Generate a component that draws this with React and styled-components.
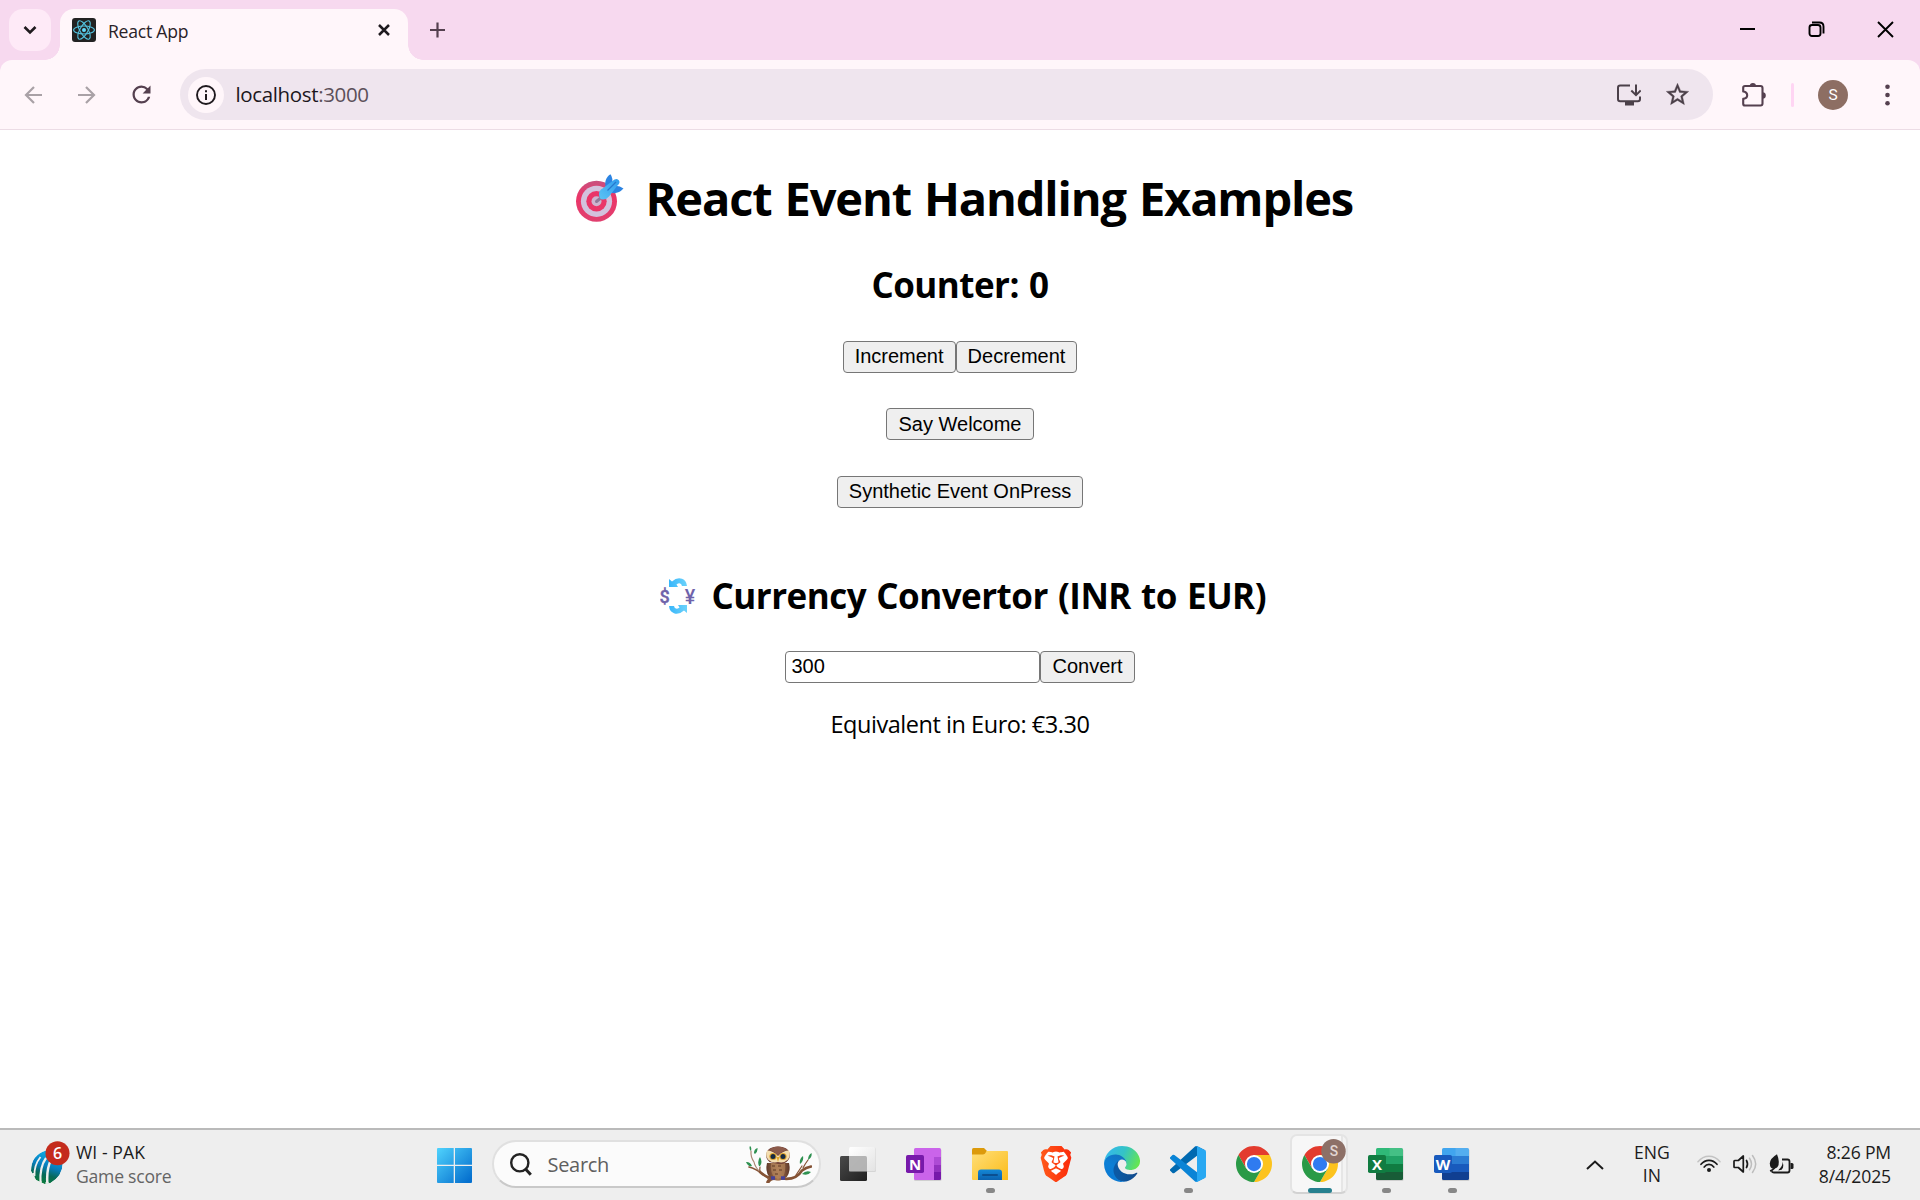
import React from "react";
import styled, { createGlobalStyle } from "styled-components";
import { SiBrave } from "react-icons/si";
import { MdRefresh, MdStarOutline } from "react-icons/md";

const GlobalStyle = createGlobalStyle`
  *, *::before, *::after { box-sizing: border-box; }
  body {
    margin: 0;
    background: #fff;
    font-family: "Open Sans", "Noto Sans", sans-serif;
    color: #000;
  }
  svg { display: block; flex: none; }
`;

const Screen = styled.div`
  width: 1920px;
  height: 1200px;
  display: flex;
  flex-direction: column;
  overflow: hidden;
`;

/* ---------- Tab strip ---------- */

const TabStrip = styled.header`
  height: 60px;
  flex: none;
  display: flex;
  align-items: flex-end;
  padding-left: 9px;
  background: #f7d9ef;
`;

const TabSearch = styled.button`
  width: 42px;
  height: 42px;
  margin-bottom: 9px;
  padding: 0;
  border: 0;
  border-radius: 14px;
  background: #feeaf7;
  display: grid;
  place-items: center;
`;

const Flare = styled.span`
  width: 15px;
  height: 15px;
  margin-left: ${(p) => (p.$side === "left" ? "-6px" : "0")};
  background: radial-gradient(
    circle at ${(p) => (p.$side === "left" ? "0 0" : "100% 0")},
    transparent 14.5px,
    #fff6fa 15px
  );
`;

const Tab = styled.div`
  width: 348px;
  height: 51px;
  padding: 0 18px 9px 12px;
  display: flex;
  align-items: center;
  border-radius: 14px 14px 0 0;
  background: #fff6fa;
`;

const TabTitle = styled.span`
  flex: 1;
  padding: 2px 0 0 12px;
  font-size: 17.6px;
  line-height: 26px;
  letter-spacing: -0.24px;
  color: #2a2228;
`;

const NewTab = styled.span`
  height: 60px;
  display: flex;
  align-items: center;
`;

const WindowControls = styled.div`
  margin-left: auto;
  height: 60px;
  padding: 0 26px 1px 0;
  display: flex;
  align-items: center;
  gap: 52px;
`;

/* ---------- Toolbar ---------- */

const ToolbarBack = styled.div`
  flex: none;
  background: #f7d9ef;
`;

const Toolbar = styled.nav`
  height: 70px;
  padding: 0 30px 0 24px;
  display: flex;
  align-items: center;
  border-bottom: 1px solid #ecdce5;
  border-radius: 12px 12px 0 0;
  background: #fff6fa;
`;

const NavButtons = styled.div`
  width: 156px;
  display: flex;
  align-items: center;
  gap: 34px;

  svg:last-child {
    margin-left: -2px;
  }
`;

const Omnibox = styled.div`
  width: 1533px;
  height: 51px;
  padding: 0 22px 0 8px;
  display: flex;
  align-items: center;
  border-radius: 26px;
  background: #efe5ee;
`;

const SiteInfo = styled.span`
  width: 36px;
  height: 36px;
  border-radius: 50%;
  background: #fff6fa;
  display: grid;
  place-items: center;
`;

const Url = styled.span`
  flex: 1;
  padding: 0 0 2px 11.5px;
  font-size: 20.5px;
  line-height: 28px;
  letter-spacing: -0.36px;
  color: #1d171c;
`;

const Port = styled.span`
  color: #5c5059;
`;

const OmniboxActions = styled.div`
  display: flex;
  align-items: center;
  gap: 23px;
`;

const ToolbarActions = styled.div`
  flex: 1;
  padding-left: 29px;
  display: flex;
  align-items: center;
`;

const Divider = styled.span`
  width: 3px;
  height: 24px;
  margin: 0 24px;
  border-radius: 2px;
  background: #ffd5f3;
`;

const Avatar = styled.span`
  width: 30px;
  height: 30px;
  margin-right: auto;
  border-radius: 50%;
  background: #8d6e63;
  color: #fff;
  font: 15.5px/30px Roboto, sans-serif;
  text-align: center;
`;

/* ---------- Page ---------- */

const Page = styled.main`
  flex: 1;
  padding-top: 36px;
  display: flex;
  flex-direction: column;
  align-items: center;
  background: #fff;
`;

const Title = styled.h1`
  margin: 0;
  padding-left: 9px;
  display: flex;
  align-items: center;
  gap: 21.5px;
  font-size: 47px;
  line-height: 64px;
  letter-spacing: -1.15px;
  word-spacing: 2px;
  white-space: nowrap;
`;

const Subtitle = styled.h2`
  margin: ${(p) => p.$top}px 0 ${(p) => p.$bottom}px;
  padding-left: ${(p) => (p.$icon ? "6px" : "0")};
  display: flex;
  align-items: center;
  gap: 15.6px;
  font-size: 35px;
  line-height: 48px;
  letter-spacing: -0.52px;
  word-spacing: 1.6px;
  white-space: nowrap;
`;

const Row = styled.div`
  display: flex;
  margin-bottom: ${(p) => p.$bottom || 0}px;
`;

const Button = styled.button`
  height: 32px;
  padding: ${(p) => (p.$drop ? "1px 11px 0" : "0 11px 1px")};
  border: 1px solid #767676;
  border-radius: 4px;
  background: #efefef;
  color: #000;
  font: 20px/29px "Liberation Sans", Arial, sans-serif;
  white-space: nowrap;
`;

const AmountInput = styled.input`
  width: 255px;
  height: 32px;
  padding: 0 5px 1px;
  border: 1px solid #767676;
  border-radius: 4px;
  background: #fff;
  color: #000;
  font: 20px/29px "Liberation Sans", Arial, sans-serif;
  outline: none;
`;

const Result = styled.p`
  margin: 25px 0 0;
  font-size: 23.5px;
  line-height: 32px;
  letter-spacing: -0.46px;
`;

/* ---------- Taskbar ---------- */

const Taskbar = styled.footer`
  height: 72px;
  flex: none;
  padding: 0 29px 0 31px;
  display: flex;
  align-items: center;
  border-top: 2px solid #bababa;
  background: #eeeeee;
`;

const Widget = styled.div`
  width: 406px;
  display: flex;
  align-items: center;
  gap: 6px;
`;

const Lines = styled.div`
  width: ${(p) => p.$width || "auto"};
  margin-left: ${(p) => p.$left || 0}px;
  padding-bottom: 3px;
  display: flex;
  flex-direction: column;
  text-align: ${(p) => p.$align || "left"};
`;

const Line = styled.span`
  font-size: 17.6px;
  line-height: ${(p) => p.$height || 24}px;
  letter-spacing: ${(p) => p.$spacing || 0}px;
  color: ${(p) => (p.$muted ? "#646464" : "#1b1b1b")};
  white-space: nowrap;
`;

const SearchBox = styled.div`
  width: 329px;
  height: 48px;
  margin: -2px 4px 0 20px;
  padding: 0 7px 0 16px;
  display: flex;
  align-items: center;
  border: 2px solid #e0e0e0;
  border-bottom-color: #c9c9c9;
  border-radius: 24px;
  background: #fbfbfb;
`;

const SearchText = styled.span`
  flex: 1;
  padding: 1px 0 0 15.5px;
  font-size: 20px;
  line-height: 28px;
  letter-spacing: -0.3px;
  color: #5f5f5f;
`;

const App66 = styled.div`
  width: 66px;
  height: 70px;
  padding-top: 16px;
  display: flex;
  flex-direction: column;
  align-items: center;
`;

const Indicator = styled.span`
  width: ${(p) => (p.$active ? 24 : 9)}px;
  height: 5px;
  margin-top: 6px;
  border-radius: 3px;
  background: ${(p) => (p.$active ? "#26808f" : "#878787")};
`;

const ActiveTile = styled.div`
  width: 58px;
  height: 60px;
  margin: -12px 0 0 -2px;
  padding: 10px 0 0 10px;
  border: 2px solid #e4e4e4;
  border-bottom-color: #d2d2d2;
  border-radius: 7px;
  background: linear-gradient(90deg, #f7f7f7 0 49px, #e6e6e6 49px 51px, #f3f3f3 51px);
`;

const ActiveIndicator = styled(Indicator)`
  display: block;
  margin: 6px 0 0 6px;
`;

const Tray = styled.div`
  margin-left: auto;
  display: flex;
  align-items: center;
`;

const TrayIcons = styled.div`
  display: flex;
  align-items: center;
  gap: 12px;
  margin: -3px 25px 0 12px;
`;

/* ---------- Icons ---------- */

const Stroke = ({ w, h, d, c = "#000", sw = 2, cap = "butt" }) => (
  <svg width={w} height={h} viewBox={`0 0 ${w} ${h}`} fill="none" stroke={c} strokeWidth={sw} strokeLinecap={cap}>
    <path d={d} />
  </svg>
);

const ReactIcon = () => (
  <svg width="24" height="24" viewBox="0 0 24 24">
    <rect width="24" height="24" rx="3" fill="#222" />
    <g fill="none" stroke="#53c1de" strokeWidth="1.1">
      {[0, 60, 120].map((r) => (
        <ellipse key={r} cx="12" cy="12" rx="10.4" ry="4" transform={`rotate(${r} 12 12)`} />
      ))}
    </g>
    <circle cx="12" cy="12" r="2" fill="#61dafb" />
  </svg>
);

const InfoIcon = () => (
  <svg width="20" height="20" viewBox="0 0 20 20">
    <circle cx="10" cy="10" r="9" fill="none" stroke="#1f1a1e" strokeWidth="1.9" />
    <path d="M10 9v6M10 5.2v2" stroke="#1f1a1e" strokeWidth="2" />
  </svg>
);

const InstallIcon = () => (
  <svg width="24" height="22" viewBox="0 0 24 22" fill="none" stroke="#4b4049" strokeWidth="2">
    <path d="M13 1.5H3.2Q1 1.5 1 3.7V15q0 2.2 2.2 2.2h17.6Q23 17.2 23 15v-2.5" />
    <path d="M19 .5v10M14.3 6.5l4.7 4.7 4.7-4.7" />
    <path d="M8 19.5h9" strokeWidth="4" />
  </svg>
);

const PuzzleIcon = () => (
  <svg width="25" height="25" viewBox="0 0 25 25">
    <path
      d="M3 4h15.500q2 0 2 2v15.500q0 2-2 2H3q-1.800 0-1.800-1.800v-4.800q4-.700 4-3.700t-4-3.700V5.800Q1.200 4 3 4z"
      fill="none"
      stroke="#55404f"
      strokeWidth="2.1"
      strokeLinejoin="round"
    />
    <path d="M7.8 4a3.1 3.1 0 0 1 6.2 0zM20.5 10.2a3.3 3.3 0 0 1 0 6.6z" fill="#55404f" />
  </svg>
);

const DotsIcon = () => (
  <svg width="5" height="22" viewBox="0 0 5 22" fill="#55404f">
    <circle cx="2.5" cy="2.7" r="2.3" />
    <circle cx="2.5" cy="11" r="2.3" />
    <circle cx="2.5" cy="19.3" r="2.3" />
  </svg>
);

const TargetIcon = () => (
  <svg width="48" height="48" viewBox="0 0 48 48">
    <defs>
      <linearGradient id="ring" x1="0" y1="0" x2="0" y2="1">
        <stop offset="0" stopColor="#c8517f" />
        <stop offset=".4" stopColor="#ec3568" />
        <stop offset="1" stopColor="#e0406f" />
      </linearGradient>
      <linearGradient id="dart" x1="0" y1="1" x2="1" y2="0">
        <stop offset="0" stopColor="#5cc4f5" />
        <stop offset="1" stopColor="#2f9bec" />
      </linearGradient>
    </defs>
    <circle cx="20.5" cy="27.3" r="20.5" fill="url(#ring)" />
    <circle cx="20.5" cy="27.3" r="15.6" fill="#d3c2dd" />
    <circle cx="20.5" cy="27.3" r="10.2" fill="#ea3568" />
    <circle cx="20.5" cy="27.3" r="5" fill="#cdb4cf" />
    <path d="M20.5 27.5l6-5" stroke="#8f7a99" strokeWidth="3" strokeLinecap="round" />
    <path d="M30 14.500C28 8 30 3 34.500.300q2.800 4 1.500 10z" fill="#2c84e2" />
    <path d="M33 18q8 3.500 14.500-3.500-4-3.300-10.500-2.500z" fill="#2c84e2" />
    <path d="M23 20q0-3.500 3.500-5.500L38.500 5.500q3-1.500 4.500 1t-1.500 5L33 22.500q-3 3.500-6.500 3T23 20z" fill="url(#dart)" />
    <path d="M31.5 16.5l8.500-8.500" stroke="#2678cf" strokeWidth="1.3" />
  </svg>
);

const ExchangeIcon = () => (
  <svg width="36" height="36" viewBox="0 0 36 36">
    <defs>
      <linearGradient id="exch" x1="0" y1="0" x2="1" y2="0">
        <stop offset="0" stopColor="#38b6fa" />
        <stop offset="1" stopColor="#6cd2fb" />
      </linearGradient>
    </defs>
    <path d="M9 1l3 2.500Q17-1 22 .800q4.500 1.700 5 7.200h-5Q21.500 5 19 5.200q-1.500.2-2.500 1.300L18 9H9z" fill="url(#exch)" />
    <path d="M27 35l-3-2.500q-5 4.500-10 2.700-4.500-1.700-5-7.200h5q.5 3 3 2.800 1.500-.2 2.500-1.300L18 27h9z" fill="url(#exch)" />
    <g fill="#6f63aa" fontFamily="Roboto, sans-serif" fontWeight="500" textAnchor="middle" letterSpacing="0">
      <text x="4.6" y="24.5" fontSize="18" stroke="#6f63aa" strokeWidth=".4">$</text>
      <text x="30" y="25.5" fontSize="20" textLength="10.5" lengthAdjust="spacingAndGlyphs">¥</text>
    </g>
  </svg>
);

const CricketIcon = () => (
  <svg width="39" height="48" viewBox="0 0 39 48">
    <defs>
      <linearGradient id="ball" gradientUnits="userSpaceOnUse" x1="22" y1="9" x2="12" y2="42">
        <stop offset="0" stopColor="#0fb5ee" />
        <stop offset=".5" stopColor="#087dbd" />
        <stop offset=".75" stopColor="#08695a" />
        <stop offset="1" stopColor="#0a7a3c" />
      </linearGradient>
      <clipPath id="ballShape">
        <path d="M15 9.500Q27 7 31.500 20q1.500 14-12 22L13.500 43 5 39 0 30Q0 14 15 9.500z" />
      </clipPath>
    </defs>
    <g clipPath="url(#ballShape)">
      <path d="M15 9.500Q27 7 31.500 20q1.500 14-12 22L13.500 43 5 39 0 30Q0 14 15 9.500z" fill="url(#ball)" />
      <g fill="none" stroke="#eee" strokeWidth="1.800">
        <path d="M9.500 16Q3 24 3.500 35" />
        <path d="M15 17Q8.500 26 9.500 42" strokeWidth="2.200" />
        <path d="M20.500 18Q15 28 16.500 44" strokeWidth="2.500" />
      </g>
      <path d="M0 32l3 0 1 6-5 0zM8.500 40h2v4h-2zM14.500 41h3v3h-3z" fill="#eee" />
    </g>
    <circle cx="26.500" cy="12.300" r="12" fill="#c42b1c" />
    <text x="26.500" y="18" fill="#fff" fontFamily="Open Sans, sans-serif" fontWeight="600" fontSize="16" textAnchor="middle">6</text>
  </svg>
);

const WindowsIcon = () => (
  <svg width="35" height="35" viewBox="0 0 35 35">
    <defs>
      <linearGradient id="win" gradientUnits="userSpaceOnUse" x1="0" y1="0" x2="32" y2="32">
        <stop offset="0" stopColor="#50d3fd" />
        <stop offset="1" stopColor="#0671cf" />
      </linearGradient>
    </defs>
    <path d="M1 0h15.700v16.700H0V1q0-1 1-1zM18 0h16q1 0 1 1v15.700H18zM0 18h16.700v17H1q-1 0-1-1zM18 18h17v16q0 1-1 1H18z" fill="url(#win)" />
  </svg>
);

const SearchIcon = () => (
  <svg width="22" height="23" viewBox="0 0 22 23" fill="none" stroke="#222">
    <circle cx="9.8" cy="9.8" r="8.6" strokeWidth="2.4" />
    <path d="M15.500 16l5.300 5.700" strokeWidth="3" />
  </svg>
);

const OwlIcon = () => (
  <svg width="66" height="37" viewBox="0 0 66 37">
    <defs>
      <linearGradient id="owlBody" x1="0" y1="0" x2="1" y2="0">
        <stop offset="0" stopColor="#5e382a" />
        <stop offset=".5" stopColor="#a87750" />
        <stop offset="1" stopColor="#5e382a" />
      </linearGradient>
    </defs>
    <g fill="none" stroke="#855335" strokeLinecap="round">
      <path d="M3 21q8 2 19 11" strokeWidth="1.7" />
      <path d="M5 5q-.5 6 3 11 1 5 6 10" strokeWidth="1.2" stroke="#a98672" />
      <path d="M14 21q-1 3 1 6" strokeWidth="1.2" />
      <path d="M14 26q10 9 22 6.500 14 2 20-8 4-3 9-4" strokeWidth="2.600" />
      <path d="M22 36q2-4 8-4" strokeWidth="3.500" />
      <path d="M57 22q2-4 5-8M50 29l6-9" strokeWidth="1.200" />
    </g>
    <g fill="#2f9151">
      <path d="M4 4q-1-3 0-4 2 1 1 5zM8 7q0-4 3.500-5 .5 4-2.500 6zM0 16q4-.5 6 4-4 1-6-4zM13 20q-2-5 1-9 3 5 0 9zM54 18q-1-5 3-8 1 5-3 8zM62 14q0-5 3.500-7 1 4-3.500 7zM56 28q4-4 9-2-3 4-9 2z" />
    </g>
    <path d="M21 17q-2 8 2 13.500 5 4 9 4 5 0 9-4 4-5.500 2-13.500z" fill="url(#owlBody)" />
    <path d="M25 17q-1 9 3 14l4 2 5-2q3-5 2-14z" fill="#b98a5f" opacity=".6" />
    <path d="M26 20h3m3 0h3m-8 4h3m3 0h3m-7 4h3" stroke="#5f3b26" strokeWidth="1" />
    <path d="M20.500 7Q22 .500 32 .500T43.500 7Q45 12 40.500 16 36 19 32 18t-8.500-2Q19 12 20.500 7z" fill="#76453a" />
    <path d="M21 4.500q6 0 11 5.500 5-5.500 11-5.500 2 5-1 9-4 4-10 2.500Q26 17.500 22 13.500q-3-4-1-9z" fill="#f4deb0" />
    <path d="M23 4q5 1 9 5 4-4 9-5Q37 .500 32 .500T23 4z" fill="#8c5b4b" />
    <circle cx="27" cy="10.5" r="3.6" fill="#dfa42c" />
    <circle cx="37" cy="10.5" r="3.6" fill="#dfa42c" />
    <circle cx="27" cy="10.5" r="2.5" fill="#182b42" />
    <circle cx="37" cy="10.5" r="2.5" fill="#182b42" />
    <path d="M30.500 11h3l-1.500 5z" fill="#e2a72d" />
    <path d="M25 32h4M35 32h4" stroke="#45419a" strokeWidth="3.500" />
  </svg>
);

const TaskViewIcon = () => (
  <svg width="36" height="36" viewBox="0 0 36 36">
    <defs>
      <linearGradient id="tvDark" x1="0" y1="0" x2="1" y2="1">
        <stop offset="0" stopColor="#4a4a4a" />
        <stop offset="1" stopColor="#1f1f1f" />
      </linearGradient>
      <linearGradient id="tvLight" x1="0" y1="0" x2="1" y2="1">
        <stop offset="0" stopColor="#fff" />
        <stop offset="1" stopColor="#e3e3e3" />
      </linearGradient>
    </defs>
    <rect y="10" width="27" height="25" rx="1.5" fill="url(#tvDark)" />
    <rect x="9" y="1.5" width="27" height="24.5" rx="1.5" fill="#bbb" opacity=".5" />
    <rect x="9" y="1" width="26.5" height="24" rx="1.5" fill="url(#tvLight)" />
    <path d="M9 10h16.500q1.500 0 1.500 1.500V25H9z" fill="#a9a9a9" opacity=".85" />
  </svg>
);

const OfficeIcon = ({ letter, bands, badge, inset }) => (
  <svg width="36" height="36" viewBox="0 0 36 36">
    <rect x="8" y="3" width="27.5" height="32" rx="1.5" fill="#bbb" opacity=".6" />
    {inset ? (
      <g>
        <rect x="8" y="2" width="27" height="32" rx="1.5" fill={bands[0]} />
        <rect x="28" y="11" width="7" height="8" fill={bands[1]} />
        <rect x="28" y="19" width="7" height="7" fill={bands[2]} />
        <path d="M28 26h7v6.500q0 1.500-1.500 1.500H28z" fill={bands[3]} />
      </g>
    ) : (
      <g>
        <path d="M9.500 2h24Q35 2 35 3.500V10H8V3.500Q8 2 9.500 2z" fill={bands[0]} />
        <rect x="8" y="10" width="27" height="8" fill={bands[1]} />
        <rect x="8" y="18" width="27" height="8" fill={bands[2]} />
        <path d="M8 26h27v6.500q0 1.500-1.500 1.500h-24Q8 34 8 32.500z" fill={bands[3]} />
        <path d="M21.500 2H33.500Q35 2 35 3.500V10H21.500z" fill="#fff" opacity=".1" />
      </g>
    )}
    <rect x="0" y="9" width="18" height="18" rx="1.8" fill={badge} />
    <text x="9" y="23.500" fill="#fff" fontFamily="Open Sans, sans-serif" fontWeight="700" fontSize="15" textAnchor="middle">
      {letter}
    </text>
  </svg>
);

const ExplorerIcon = () => (
  <svg width="36" height="36" viewBox="0 0 36 36">
    <defs>
      <linearGradient id="folder" x1="0" y1="0" x2="1" y2="1">
        <stop offset="0" stopColor="#ffdf79" />
        <stop offset="1" stopColor="#fbbb18" />
      </linearGradient>
      <linearGradient id="pocket" x1="0" y1="0" x2="0" y2="1">
        <stop offset="0" stopColor="#1488d6" />
        <stop offset="1" stopColor="#0b62b0" />
      </linearGradient>
    </defs>
    <path d="M0 3.500Q0 2 1.500 2H12l3 3v5H0z" fill="#dc9a0b" />
    <path d="M0 8.500h11q2 0 3.500-3.500H35q1 0 1 1v28H1q-1 0-1-1z" fill="url(#folder)" />
    <path d="M6 34V26.500Q6 23.500 9 23.500h18q3 0 3 3V34z" fill="url(#pocket)" />
    <path d="M11 29h14" stroke="#0b4f90" strokeWidth="2" strokeLinecap="round" />
  </svg>
);

const BraveIcon = () => (
  <svg width="36" height="36" viewBox="0 0 36 36">
    <defs>
      <linearGradient id="brave" x1="0" y1="0" x2="1" y2="0">
        <stop offset="0" stopColor="#ff5a1a" />
        <stop offset="1" stopColor="#fb2a0a" />
      </linearGradient>
    </defs>
    <path d="M10 6h16l4 6-3 14-9 7-9-7-3-14z" fill="#fff" />
    <SiBrave size={36} fill="url(#brave)" />
  </svg>
);

const EdgeIcon = () => (
  <svg width="36" height="36" viewBox="0 0 256 256">
    <defs>
      <linearGradient id="edgeA" x1=".2" y1="0" x2="1" y2="0">
        <stop offset="0" stopColor="#0c59a4" />
        <stop offset="1" stopColor="#114a8b" />
      </linearGradient>
      <linearGradient id="edgeB" x1=".7" y1="0" x2=".3" y2="1">
        <stop offset="0" stopColor="#1471bd" />
        <stop offset=".5" stopColor="#0c7fd6" />
        <stop offset="1" stopColor="#0a78d2" />
      </linearGradient>
      <linearGradient id="edgeC" x1="0" y1=".3" x2="1" y2=".6">
        <stop offset="0" stopColor="#35b8ee" />
        <stop offset=".5" stopColor="#34c3c6" />
        <stop offset="1" stopColor="#66e650" />
      </linearGradient>
    </defs>
    <path fill="url(#edgeA)" d="M231 190.500c-3.400 1.800-6.900 3.400-10.500 4.700a101.500 101.500 0 0 1-35.600 6.400c-47 0-87.900-32.300-87.900-73.800a31.400 31.400 0 0 1 16.300-27.200c-42.500 1.800-53.400 46.100-53.400 72 0 73.300 67.600 80.800 82.100 80.800 7.900 0 19.700-2.300 26.900-4.500l1.300-.4a128.300 128.300 0 0 0 66.500-52.800 4 4 0 0 0-5.700-5.200z" />
    <path fill="url(#edgeB)" d="M105.700 241.400a79.200 79.200 0 0 1-22.700-21.300 80.700 80.700 0 0 1 29.600-120c3.200-1.500 8.500-4.200 15.700-4.100a32.400 32.400 0 0 1 25.700 13 31.900 31.900 0 0 1 6.300 18.700c0-.2 24.500-79.600-80-79.600-43.900 0-80 41.600-80 78.200a130.200 130.200 0 0 0 12.100 56 128 128 0 0 0 156.400 67.100 75.600 75.600 0 0 1-62.900-8z" />
    <path fill="url(#edgeC)" d="M152.300 148.900c-.8 1-3.300 2.500-3.300 5.600 0 2.600 1.700 5.100 4.700 7.200 14.400 10 41.500 8.700 41.600 8.700 10.700 0 21.100-2.900 30.300-8.300a61.800 61.800 0 0 0 30.500-53.100c.2-22.400-8-37.300-11.400-43.900C223.900 23.300 178 0 128 0A128 128 0 0 0 0 126.200c.5-36.500 36.800-66 80-66 3.500 0 23.500.3 42 10.100 16.300 8.600 24.900 18.900 30.800 29.200 6.200 10.700 7.300 24.100 7.300 29.500s-2.700 13.300-7.800 19.900z" />
  </svg>
);

const CodeIcon = () => (
  <svg width="36" height="36" viewBox="0 0 100 100">
    <path fill="#0069b0" d="M96.460 10.800 75.870.88a6.230 6.230 0 0 0-7.100 1.210L1.360 63.560a4.170 4.170 0 0 0 0 6.160l5.510 5.010a4.160 4.160 0 0 0 5.320.24L93.370 13.400c2.720-2.070 6.630-.13 6.630 3.290v-.24a6.250 6.250 0 0 0-3.540-5.650z" />
    <path fill="#0a84d6" d="M96.460 89.200 75.870 99.100a6.230 6.230 0 0 1-7.100-1.210L1.360 36.440a4.170 4.170 0 0 1 0-6.160l5.510-5.010a4.160 4.160 0 0 1 5.320-.24l81.180 61.570c2.720 2.070 6.630.13 6.630-3.290v.24a6.250 6.250 0 0 1-3.540 5.650z" />
    <path fill="#28a8f2" d="M75.870 99.100a6.230 6.230 0 0 1-7.110-1.210c2.310 2.310 6.250.68 6.250-2.590V4.700c0-3.260-3.940-4.900-6.250-2.590A6.230 6.230 0 0 1 75.870.9l20.580 9.900A6.250 6.250 0 0 1 100 16.400v67.200c0 2.400-1.370 4.600-3.550 5.630z" />
  </svg>
);

const ChromeIcon = ({ badge }) => (
  <svg width={badge ? 44 : 36} height="36" viewBox={badge ? "-24 -24 58.67 48" : "-24 -24 48 48"} overflow="visible">
    <path fill="#e33b2e" d="M-20.780-12A24 24 0 0 1 20.780-12L0-12-10.390 6z" />
    <path fill="#fcc31e" d="M20.780-12A24 24 0 0 1 0 24L10.390 6 0-12z" />
    <path fill="#2a9a47" d="M0 24A24 24 0 0 1-20.780-12L-10.390 6 10.390 6z" />
    <circle r="12" fill="#fff" />
    <circle r="9.500" fill="#2f7bf0" />
    {badge && (
      <g>
        <circle cx="18" cy="-17" r="16.3" fill="#8d7067" />
        <text x="18.5" y="-10.5" fill="#e2d6d2" fontFamily="Roboto, sans-serif" fontWeight="500" fontSize="18.5" textAnchor="middle">S</text>
      </g>
    )}
  </svg>
);

const WifiIcon = () => (
  <svg width="24" height="18" viewBox="0 0 24 18" fill="none" strokeLinecap="round">
    <path d="M1 6.800Q5.500 1.200 12 1.200T23 6.800" stroke="#c3c3c3" strokeWidth="1.500" />
    <path d="M4 9.300q3.300-4 8-4t8 4M7.200 12q2-2.600 4.800-2.600t4.800 2.600" stroke="#1b1b1b" strokeWidth="1.700" />
    <circle cx="12" cy="15" r="2" fill="#1b1b1b" />
  </svg>
);

const VolumeIcon = () => (
  <svg width="24" height="20" viewBox="0 0 24 20" fill="none" strokeLinecap="round" strokeLinejoin="round">
    <path d="M1 7.200q0-.7.7-.7h3.600l5-4.500v16l-5-4.500H1.700q-.7 0-.7-.7z" stroke="#1b1b1b" strokeWidth="1.700" />
    <path d="M13.500 6.500q2 3.500 0 7" stroke="#1b1b1b" strokeWidth="1.700" />
    <path d="M16.500 4.200q4 5.800 0 11.600M19.500 1.500q6.400 8.500 0 17" stroke="#bdbdbd" strokeWidth="1.500" />
  </svg>
);

const BatteryIcon = () => (
  <svg width="25" height="20" viewBox="0 0 25 20">
    <path d="M13 5.500h5.500q2 0 2 2v9q0 2-2 2H5q-1.500 0-2.500-1.300" fill="none" stroke="#1b1b1b" strokeWidth="1.800" />
    <path d="M21.500 9h1.500q1.500 0 1.500 1.500v3Q24.500 15 23 15h-1.500z" fill="#1b1b1b" />
    <path d="M8 .300Q1 4.500.800 9.500 1 15 5 14.800 10 14 9.800 8 9.500 3.500 8 .300z" fill="#1b1b1b" />
    <path d="M1 17q5-1.500 6-7" stroke="#1b1b1b" strokeWidth="1.500" fill="none" />
    <path d="M13.500 7.500q.5 5-4.500 8.700 4 .5 5-2.500.7-3-.5-6.200z" fill="#1b1b1b" />
  </svg>
);

const TASKBAR_APPS = [
  { id: "taskview", icon: <TaskViewIcon /> },
  { id: "onenote", icon: <OfficeIcon letter="N" inset badge="#7719aa" bands={["#ca64ea", "#ae4bd5", "#9332bf", "#7719aa"]} /> },
  { id: "explorer", icon: <ExplorerIcon />, open: true },
  { id: "brave", icon: <BraveIcon /> },
  { id: "edge", icon: <EdgeIcon /> },
  { id: "code", icon: <CodeIcon />, open: true },
  { id: "chrome", icon: <ChromeIcon /> },
  { id: "chrome-profile", icon: <ChromeIcon badge />, active: true },
  { id: "excel", icon: <OfficeIcon letter="X" badge="#107c41" bands={["#2fb978", "#21a366", "#107c41", "#185c37"]} />, open: true },
  { id: "word", icon: <OfficeIcon letter="W" badge="#185abd" bands={["#41a5ee", "#2b7cd3", "#185abd", "#103f91"]} />, open: true },
];

export default function App() {
  return (
    <Screen>
      <GlobalStyle />
      <TabStrip>
        <TabSearch>
          <Stroke w={14} h={10} d="M1.5 2l5.5 5.5L12.5 2" c="#1f1a1e" sw={2.6} />
        </TabSearch>
        <Flare $side="left" />
        <Tab>
          <ReactIcon />
          <TabTitle>React App</TabTitle>
          <Stroke w={12} h={12} d="M1 1l10 10M11 1L1 11" c="#1f1a1e" sw={2.5} />
        </Tab>
        <Flare $side="right" />
        <NewTab>
          <Stroke w={30} h={16} d="M7 8h15M14.500 .5v15" c="#55404f" sw={2.2} />
        </NewTab>
        <WindowControls>
          <Stroke w={17} h={17} d="M1 8h15" sw={2} />
          <svg width="17" height="17" viewBox="0 0 17 17" fill="none" stroke="#000" strokeWidth="1.9">
            <rect x="1.5" y="4" width="11" height="11" rx="2.5" />
            <path d="M4 1.500h7.500q4 0 4 4v7" />
          </svg>
          <Stroke w={17} h={17} d="M1 1l15 15M16 1L1 16" sw={1.9} />
        </WindowControls>
      </TabStrip>

      <ToolbarBack>
        <Toolbar>
          <NavButtons>
            <Stroke w={19} h={18} d="M18 9H2M10 1L2 9l8 8" c="#a9a1a6" sw={2.2} />
            <Stroke w={19} h={18} d="M1 9h16M9 1l8 8-8 8" c="#a9a1a6" sw={2.2} />
            <MdRefresh size={27} color="#55404f" />
          </NavButtons>
          <Omnibox>
            <SiteInfo>
              <InfoIcon />
            </SiteInfo>
            <Url>
              localhost<Port>:3000</Port>
            </Url>
            <OmniboxActions>
              <InstallIcon />
              <MdStarOutline size={27} color="#4b4049" stroke="#4b4049" strokeWidth={0.3} />
            </OmniboxActions>
          </Omnibox>
          <ToolbarActions>
            <PuzzleIcon />
            <Divider />
            <Avatar>S</Avatar>
            <DotsIcon />
          </ToolbarActions>
        </Toolbar>
      </ToolbarBack>

      <Page>
        <Title>
          <TargetIcon />
          React Event Handling Examples
        </Title>
        <Subtitle $top={31} $bottom={32}>Counter: 0</Subtitle>
        <Row $bottom={35}>
          <Button>Increment</Button>
          <Button>Decrement</Button>
        </Row>
        <Row $bottom={36}>
          <Button $drop>Say Welcome</Button>
        </Row>
        <Row>
          <Button>Synthetic Event OnPress</Button>
        </Row>
        <Subtitle $top={64} $bottom={31} $icon>
          <ExchangeIcon />
          Currency Convertor (INR to EUR)
        </Subtitle>
        <Row>
          <AmountInput defaultValue="300" />
          <Button>Convert</Button>
        </Row>
        <Result>Equivalent in Euro: €3.30</Result>
      </Page>

      <Taskbar>
        <Widget>
          <CricketIcon />
          <Lines>
            <Line $spacing={0.08}>WI - PAK</Line>
            <Line $spacing={-0.24} $muted>Game score</Line>
          </Lines>
        </Widget>
        <WindowsIcon />
        <SearchBox>
          <SearchIcon />
          <SearchText>Search</SearchText>
          <OwlIcon />
        </SearchBox>
        {TASKBAR_APPS.map((app) => (
          <App66 key={app.id}>
            {app.active ? (
              <ActiveTile>
                {app.icon}
                <ActiveIndicator $active />
              </ActiveTile>
            ) : (
              app.icon
            )}
            {app.open && <Indicator />}
          </App66>
        ))}
        <Tray>
          <Stroke w={18} h={11} d="M1 9l8-7.5L17 9" c="#1b1b1b" sw={2} />
          <Lines $align="center" $width="66px" $left={15}>
            <Line $height={23}>ENG</Line>
            <Line $height={23}>IN</Line>
          </Lines>
          <TrayIcons>
            <WifiIcon />
            <VolumeIcon />
            <BatteryIcon />
          </TrayIcons>
          <Lines $align="right">
            <Line $spacing={-0.18}>8:26 PM</Line>
            <Line $spacing={-0.14}>8/4/2025</Line>
          </Lines>
        </Tray>
      </Taskbar>
    </Screen>
  );
}
